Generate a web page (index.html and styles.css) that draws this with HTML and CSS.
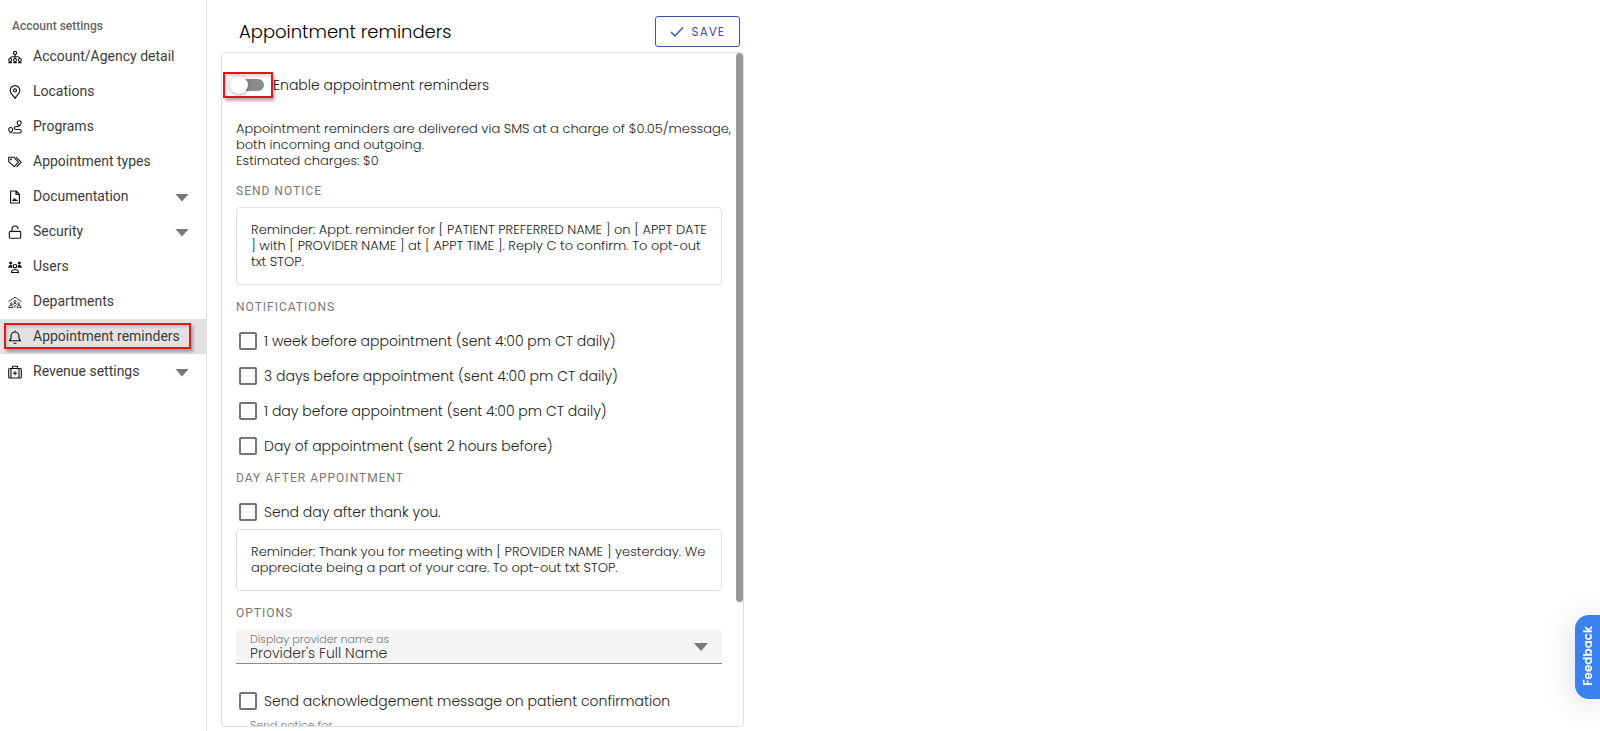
FILE: index.html
```html
<!DOCTYPE html>
<html lang="en">
<head>
<meta charset="utf-8">
<title>Appointment reminders</title>
<link rel="stylesheet" href="styles.css">
</head>
<body>
<div class="app">
  <nav class="sidebar">
    <h2 class="sidebar-title">Account settings</h2>
    <a class="nav-item" href="#"><svg class="icon" viewBox="0 0 14 14"><circle cx="7" cy="3" r="1.600"/><circle cx="2.200" cy="10" r="1.500"/><circle cx="7" cy="10" r="1.500"/><circle cx="11.800" cy="10" r="1.500"/><path d="M7 4.600v3.900M2.200 8.500Q2.400 6.800 4.500 6.800h5Q11.600 6.800 11.800 8.500M.4 12.600h3.600M5.200 12.600h3.600M10 12.600h3.600"/></svg><span class="nav-label">Account/Agency detail</span></a>
    <a class="nav-item" href="#"><svg class="icon" viewBox="0 0 14 14"><path d="M7 13.300C5 10.600 2.200 7.800 2.200 5.400a4.800 4.800 0 0 1 9.600 0C11.800 7.800 9 10.600 7 13.300z"/><circle cx="7" cy="5.400" r="1.500"/></svg><span class="nav-label">Locations</span></a>
    <a class="nav-item" href="#"><svg class="icon" viewBox="0 0 14 14"><path d="M11.200 6.200C10 4.800 9.200 3.800 9.200 2.700a2 2 0 0 1 4 0C13.200 3.800 12.400 4.800 11.200 6.200zM2.700 13C1.500 11.600.7 10.600.7 9.500a2 2 0 0 1 4 0C4.700 10.600 3.900 11.600 2.700 13zM10.500 6.500H8A1.500 1.500 0 0 0 8 9.500h3.500a1.700 1.700 0 0 1 0 3.500H4.500"/></svg><span class="nav-label">Programs</span></a>
    <a class="nav-item" href="#"><svg class="icon" viewBox="0 0 14 14"><path d="M.7 2.200h5l4.800 4.900-4.200 4.600L.7 6.600zM8 2.200l5.200 5-4.600 5"/><circle cx="3" cy="4.400" r=".4"/></svg><span class="nav-label">Appointment types</span></a>
    <a class="nav-item" href="#"><svg class="icon" viewBox="0 0 14 14"><path d="M2.600 1h5.600l3.200 3.200V13H2.600zM8 1v3.400h3.400"/><path d="M4.800 10.500l1.600-1.700 1 1 1.800.7z"/></svg><span class="nav-label">Documentation</span><span class="caret"></span></a>
    <a class="nav-item" href="#"><svg class="icon" viewBox="0 0 14 14"><rect x="1.300" y="6.400" width="11.400" height="6.800" rx="1"/><path d="M4 6.400V4a3 3 0 0 1 6 0"/></svg><span class="nav-label">Security</span><span class="caret"></span></a>
    <a class="nav-item" href="#"><svg class="icon" viewBox="0 0 14 14"><circle class="solid" cx="2.700" cy="3" r="1.500"/><circle class="solid" cx="11.300" cy="3" r="1.500"/><path class="solid" d="M.2 7.800q0-2.700 2.500-2.700 1.200 0 1.700.6L4.300 7.800zM13.800 7.800q0-2.700-2.500-2.700-1.200 0-1.700.6l.1 2.100z"/><circle cx="7" cy="6.200" r="1.700"/><path d="M3.500 12.500q.3-2.700 2.500-2.700h2q2.200 0 2.500 2.700z"/></svg><span class="nav-label">Users</span></a>
    <a class="nav-item" href="#"><svg class="icon icon-fine" viewBox="0 0 14 14"><path d="M.4 6.600L7 2.200l6.600 4.400"/><circle cx="7" cy="6.600" r="1.100"/><circle cx="3.300" cy="8.800" r=".9"/><circle cx="10.700" cy="8.800" r=".9"/><path d="M.7 12.600q.3-2.300 2.400-2.300 1.300 0 2 2.300zM13.300 12.600q-.3-2.300-2.400-2.300-1.300 0-2 2.300zM5 9.800Q5.500 8.500 7 8.500t2 1.300M7 10v2.600"/></svg><span class="nav-label">Departments</span></a>
    <a class="nav-item nav-item-active" href="#"><svg class="icon" viewBox="0 0 14 14"><path d="M1.300 10.800h11.400L11 8.600V6a4 4 0 0 0-8 0v2.600zM7 .6V2M5.600 12.900q1.400.8 2.800 0"/></svg><span class="nav-label">Appointment reminders</span><span class="callout callout-nav"></span></a>
    <a class="nav-item" href="#"><svg class="icon" viewBox="0 0 14 14"><rect x=".7" y="3.500" width="12.600" height="9.500" rx="1"/><path d="M4.500 3.500V1.300h5v2.200M3 3.500V13M11 3.500V13M7 6.300v4M5 8.300h4"/></svg><span class="nav-label">Revenue settings</span><span class="caret"></span></a>
  </nav>

  <main class="main">
    <header class="page-header">
      <h1 class="page-title">Appointment reminders</h1>
      <button class="save" type="button"><svg class="save-icon" viewBox="0 0 14 12"><path d="M1 6L5 10 13 1.500"/></svg>SAVE</button>
    </header>

    <section class="panel">
      <form class="panel-body">
        <label class="toggle-row">
          <span class="toggle-box"><input class="toggle" type="checkbox" role="switch"><span class="callout callout-toggle"></span></span>
          <span>Enable appointment reminders</span>
        </label>

        <p class="intro">Appointment reminders are delivered via SMS at a charge of $0.05/message,<br>both incoming and outgoing.<br>Estimated charges: $0</p>

        <h3 class="section-title">SEND NOTICE</h3>
        <div class="message">Reminder: Appt. reminder for [ PATIENT PREFERRED NAME ] on [ APPT DATE<br>] with [ PROVIDER NAME ] at [ APPT TIME ]. Reply C to confirm. To opt-out<br>txt STOP.</div>

        <h3 class="section-title">NOTIFICATIONS</h3>
        <label class="check-row"><input class="check" type="checkbox"><span>1 week before appointment (sent 4:00 pm CT daily)</span></label>
        <label class="check-row"><input class="check" type="checkbox"><span>3 days before appointment (sent 4:00 pm CT daily)</span></label>
        <label class="check-row"><input class="check" type="checkbox"><span>1 day before appointment (sent 4:00 pm CT daily)</span></label>
        <label class="check-row"><input class="check" type="checkbox"><span>Day of appointment (sent 2 hours before)</span></label>

        <h3 class="section-title section-title-tight">DAY AFTER APPOINTMENT</h3>
        <label class="check-row"><input class="check" type="checkbox"><span>Send day after thank you.</span></label>
        <div class="message">Reminder: Thank you for meeting with [ PROVIDER NAME ] yesterday. We<br>appreciate being a part of your care. To opt-out txt STOP.</div>

        <h3 class="section-title">OPTIONS</h3>
        <div class="field">
          <label class="field-label" for="provider-name">Display provider name as</label>
          <select class="field-select" id="provider-name"><option>Provider's Full Name</option></select>
          <span class="caret"></span>
        </div>
        <label class="check-row check-row-spaced"><input class="check" type="checkbox"><span>Send acknowledgement message on patient confirmation</span></label>
        <div class="field field-plain">
          <label class="field-label" for="notice-for">Send notice for</label>
          <select class="field-select" id="notice-for"></select>
        </div>
      </form>
      <div class="scroll-thumb"></div>
    </section>
  </main>
</div>
<button class="feedback" type="button"><span class="feedback-text">Feedback</span></button>
</body>
</html>
```
FILE: styles.css
```css
* { box-sizing: border-box; }

body {
  margin: 0;
  background: #fff;
  color: #222;
  font: 300 14px/16px Poppins, Inter, sans-serif;
}

.app { display: flex; height: 100vh; overflow: hidden; }

/* Sidebar */
.sidebar {
  flex: none;
  width: 207px;
  border-right: 1px solid #e2e2e2;
  font-family: Roboto, sans-serif;
}
.sidebar-title {
  margin: 0;
  padding: 18px 12px 5px;
  font-size: 12px;
  line-height: 16px;
  font-weight: 500;
  color: #666;
}
.nav-item {
  position: relative;
  display: flex;
  align-items: center;
  height: 35px;
  padding: 0 17px 0 8px;
  gap: 11px;
  color: #3c3c3c;
  font-size: 14px;
  font-weight: 400;
  text-decoration: none;
}
.nav-item-active { background: #e2e2e2; }
.nav-label { flex: 1; padding-bottom: 2px; white-space: nowrap; }
.icon { flex: none; width: 14px; height: 14px; fill: none; stroke: #111; stroke-width: 1.1; stroke-linejoin: round; }
.icon-fine { stroke-width: .8; }
.icon .solid { fill: #111; stroke: none; }
.caret { flex: none; width: 14px; height: 8px; margin-top: 2px; background: #777; clip-path: polygon(0 0, 100% 0, 50% 100%); }

/* Red highlight frames */
.callout {
  position: absolute;
  border: 2px solid #e01818;
  box-shadow: 2px 3px 3px rgba(0, 0, 0, .3), inset 2px 2px 3px rgba(0, 0, 0, .15);
  pointer-events: none;
}
.callout-nav { inset: 4px 15px 5px 4px; }
.callout-toggle { inset: 5px 0; }

/* Main column */
.main {
  flex: 1;
  display: flex;
  flex-direction: column;
  max-width: 551px;
  padding: 0 14px 4px;
}
.page-header {
  display: flex;
  align-items: center;
  justify-content: space-between;
  padding: 16px 4px 5px 18px;
}
.page-title { margin: 0; font-size: 18px; line-height: 31px; font-weight: 300; color: #000; }
.save {
  display: flex;
  align-items: center;
  gap: 8px;
  height: 31px;
  padding: 0 14px;
  border: 1px solid #3f51b5;
  border-radius: 3px;
  background: #fff;
  color: #3f51b5;
  font: 400 12px/16px Poppins, Inter, sans-serif;
  letter-spacing: 1px;
}
.save-icon { width: 14px; height: 12px; fill: none; stroke: currentColor; stroke-width: 1.500; }

.panel {
  position: relative;
  flex: 1;
  min-height: 0;
  border: 1px solid #e0e0e0;
  border-radius: 4px;
  overflow: hidden;
}
.panel-body { padding: 14px 21px 0 14px; }
.scroll-thumb { position: absolute; top: 0; right: 0; width: 7px; height: 81.6%; border-radius: 4px; background: #999; }

.toggle-row { display: flex; align-items: center; height: 36px; margin-left: -13px; }
.toggle-box { position: relative; display: flex; align-items: center; flex: none; width: 50px; height: 36px; padding-left: 9px; }
.toggle { appearance: none; position: relative; width: 32px; height: 12px; margin: 0; border-radius: 6px; background: #8c8c8c; }
.toggle::before {
  content: "";
  position: absolute;
  top: -3px;
  left: -2px;
  width: 18px;
  height: 18px;
  border-radius: 50%;
  background: #fff;
  box-shadow: 0 1px 4px rgba(0, 0, 0, .35);
}
.intro { margin: 18px 0 0; font-size: 13px; white-space: nowrap; }

.section-title {
  margin: 10px 0 4px;
  font: 400 12px/24px Roboto, sans-serif;
  letter-spacing: 1px;
  color: #777;
}
.section-title-tight { margin-top: 3px; }
.message {
  padding: 14px;
  border: 1px solid #e0e0e0;
  border-radius: 4px;
  font-size: 13px;
  white-space: nowrap;
}
.check-row { display: flex; align-items: center; gap: 7px; height: 35px; padding-left: 3px; }
.check-row-spaced { margin-top: 19px; }
.check { appearance: none; flex: none; width: 18px; height: 18px; margin: 0; border: 2px solid #757575; border-radius: 2px; }

.field {
  position: relative;
  display: flex;
  align-items: center;
  justify-content: flex-end;
  height: 35px;
  padding-right: 14px;
  border-bottom: 1px solid #8c8c8c;
  border-radius: 4px 4px 0 0;
  background: #f5f5f5;
}
.field-plain { background: none; }
.field-label { position: absolute; top: 3px; left: 14px; font-size: 11px; line-height: 14px; color: #777; }
.field-plain .field-label { top: 0; }
.field-select {
  appearance: none;
  position: absolute;
  inset: 0;
  padding: 14px 14px 0;
  border: 0;
  background: none;
  color: #333;
  font: 300 14px/16px Poppins, Inter, sans-serif;
}

/* Feedback tab */
.feedback {
  position: fixed;
  right: 0;
  bottom: 32px;
  width: 25px;
  height: 84px;
  padding: 0;
  border: 0;
  border-radius: 14px 0 0 14px;
  background: #3b82f0;
  box-shadow: 0 4px 32px rgba(0, 0, 0, .16);
  color: #fff;
}
.feedback-text {
  display: inline-block;
  font: 600 12px/16px Poppins, Inter, sans-serif;
  writing-mode: vertical-rl;
  transform: rotate(180deg);
}
```
